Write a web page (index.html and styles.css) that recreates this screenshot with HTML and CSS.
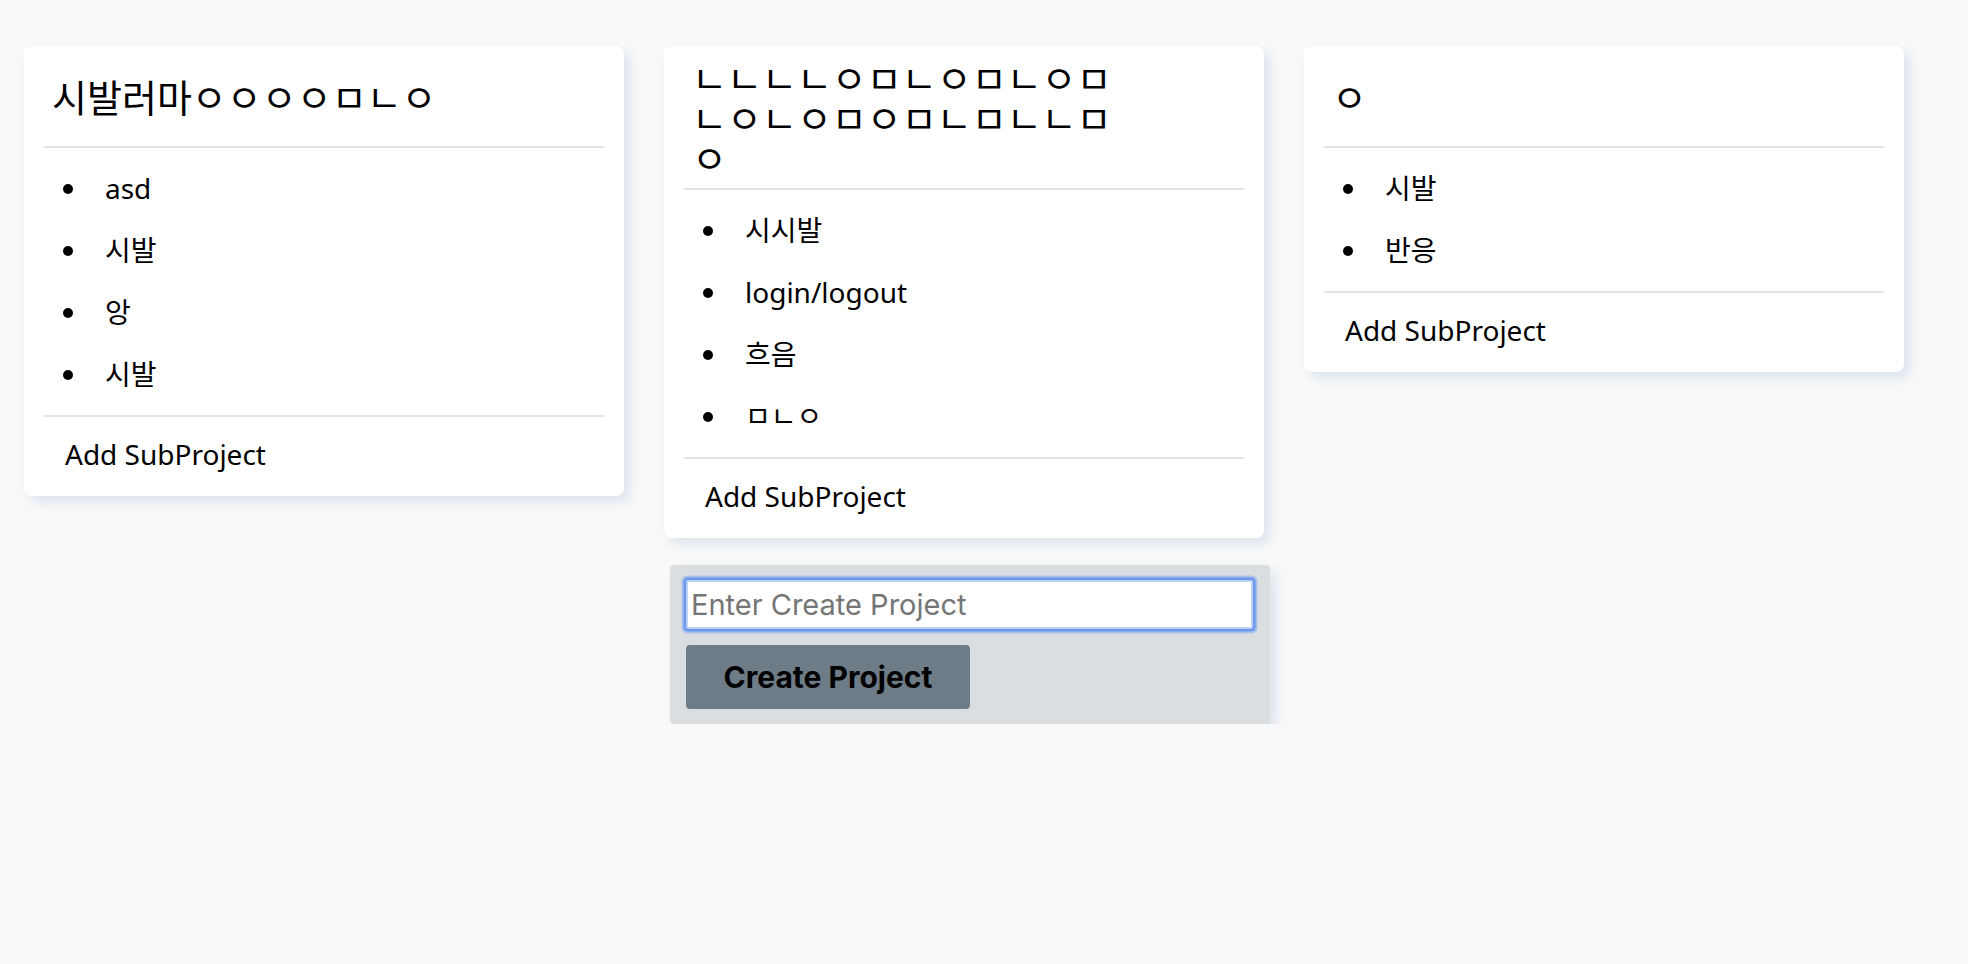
FILE: index.html
```html
<!DOCTYPE html>
<html lang="ko">
<head>
<meta charset="utf-8">
<title>Projects</title>
<link rel="stylesheet" href="styles.css">
</head>
<body>
<main class="board">
  <section class="column">
    <article class="card">
      <header class="card-head"><h2 class="card-title">시발러마ㅇㅇㅇㅇㅁㄴㅇ</h2></header>
      <ul class="subs">
        <li>asd</li>
        <li>시발</li>
        <li>앙</li>
        <li>시발</li>
      </ul>
      <div class="card-foot">Add SubProject</div>
    </article>
  </section>
  <section class="column">
    <article class="card">
      <header class="card-head"><h2 class="card-title">ㄴㄴㄴㄴㅇㅁㄴㅇㅁㄴㅇㅁㄴㅇㄴㅇㅁㅇㅁㄴㅁㄴㄴㅁㅇ</h2></header>
      <ul class="subs">
        <li>시시발</li>
        <li>login/logout</li>
        <li>흐음</li>
        <li>ㅁㄴㅇ</li>
      </ul>
      <div class="card-foot">Add SubProject</div>
    </article>
    <form class="create">
      <input class="create-input" type="text" placeholder="Enter Create Project">
      <button class="create-btn" type="button">Create Project</button>
    </form>
  </section>
  <section class="column">
    <article class="card">
      <header class="card-head"><h2 class="card-title">ㅇ</h2></header>
      <ul class="subs">
        <li>시발</li>
        <li>반응</li>
      </ul>
      <div class="card-foot">Add SubProject</div>
    </article>
  </section>
</main>
</body>
</html>
```
FILE: styles.css
```css
* { box-sizing: border-box; }

html, body {
  margin: 0;
  background: #f9f9f9;
}

body {
  font-family: "Noto Sans", "Noto Sans CJK KR", sans-serif;
  font-size: 28px;
  color: #000;
}

.board {
  display: flex;
  align-items: flex-start;
  gap: 40px;
  padding: 46px 0 0 24px;
}

.column {
  width: 600px;
  display: flex;
  flex-direction: column;
  align-items: flex-start;
  gap: 27px;
}

.card {
  width: 600px;
  background: #fff;
  border-radius: 8px;
  padding: 0 20px;
  box-shadow: 6px 6px 12px rgba(200, 214, 230, 0.6);
}

.card-head {
  display: flex;
  align-items: center;
  min-height: 102px;
  padding: 11px 8px;
  border-bottom: 2px solid #e4e4e4;
}

.card-title {
  margin: 0;
  max-width: 430px;
  font-family: "Noto Sans CJK KR", sans-serif;
  font-size: 38px;
  font-weight: 400;
  line-height: 40px;
}

.subs {
  list-style: disc;
  margin: 0;
  padding: 9px 0 10px 46px;
  border-bottom: 2px solid #e4e4e4;
}

.subs li {
  height: 62px;
  line-height: 62px;
  padding-left: 15px;
}

.card-foot {
  height: 79px;
  display: flex;
  align-items: center;
  padding: 0 0 6px 21px;
}

.create {
  width: 600px;
  margin: 0 0 0 6px;
  padding: 15px 17px 15px 16px;
  background: #dadee1;
  border-radius: 4px;
  box-shadow: 6px 6px 12px rgba(200, 214, 230, 0.6);
}

.create-input {
  display: block;
  width: 100%;
  height: 49px;
  margin: 0;
  padding: 0 3px;
  border: 2px solid #bcd1f6;
  border-radius: 2px;
  background: #fff;
  font-family: Inter, "Noto Sans", sans-serif;
  font-size: 29px;
  color: #000;
  outline: none;
  box-shadow: 0 0 0 2.5px #6b98ed, 0 0 0 4.5px rgba(140, 174, 238, 0.6);
}

.create-input::placeholder {
  color: #757575;
}

.create-btn {
  display: block;
  margin-top: 16px;
  width: 284px;
  height: 64px;
  padding: 0;
  border: 0;
  border-radius: 4px;
  background: #6d7c87;
  color: #000;
  font-family: Inter, "Noto Sans", sans-serif;
  font-size: 30px;
  font-weight: 700;
}
```
